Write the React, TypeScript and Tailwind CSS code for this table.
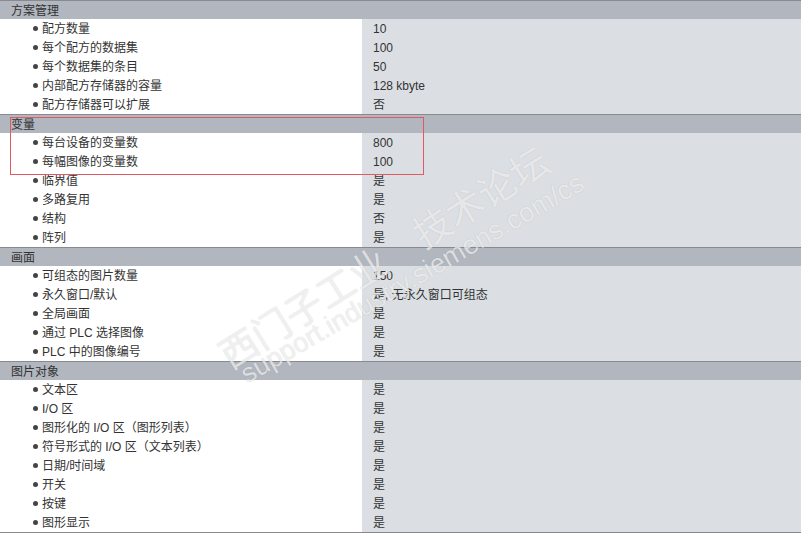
type Row = [string, string];

type Section = {
  title: string;
  rows: Row[];
};

const sections: Section[] = [
  {
    title: "方案管理",
    rows: [
      ["配方数量", "10"],
      ["每个配方的数据集", "100"],
      ["每个数据集的条目", "50"],
      ["内部配方存储器的容量", "128 kbyte"],
      ["配方存储器可以扩展", "否"],
    ],
  },
  {
    title: "变量",
    rows: [
      ["每台设备的变量数", "800"],
      ["每幅图像的变量数", "100"],
      ["临界值", "是"],
      ["多路复用", "是"],
      ["结构", "否"],
      ["阵列", "是"],
    ],
  },
  {
    title: "画面",
    rows: [
      ["可组态的图片数量", "150"],
      ["永久窗口/默认", "是, 无永久窗口可组态"],
      ["全局画面", "是"],
      ["通过 PLC 选择图像", "是"],
      ["PLC 中的图像编号", "是"],
    ],
  },
  {
    title: "图片对象",
    rows: [
      ["文本区", "是"],
      ["I/O 区", "是"],
      ["图形化的 I/O 区（图形列表）", "是"],
      ["符号形式的 I/O 区（文本列表）", "是"],
      ["日期/时间域", "是"],
      ["开关", "是"],
      ["按键", "是"],
      ["图形显示", "是"],
    ],
  },
];

export default function App() {
  return (
    <div
      className="relative h-[536px] w-[808px] overflow-hidden bg-white text-[12px] text-[#333]"
      style={{ fontFamily: '"Liberation Sans", "Noto Sans CJK SC", sans-serif' }}
    >
      <div className="w-[801px] border-b border-[#878a90]">
        {sections.map((section) => (
          <div key={section.title}>
            <div className="flex h-[19px] items-center border-t border-[#878a90] bg-[#b1b6bf] pl-[11px] pt-[1px] leading-none">
              {section.title}
            </div>

            {section.rows.map(([label, value]) => (
              <div key={label} className="flex h-[19px] leading-none">
                <div className="flex w-[362px] shrink-0 items-center bg-white">
                  <span className="ml-[33px] mr-[4px] h-[5px] w-[5px] rounded-full bg-[#444]" />
                  <span>{label}</span>
                </div>
                <div className="flex flex-1 items-center bg-[#dbdfe3] pl-[11px]">
                  {value}
                </div>
              </div>
            ))}
          </div>
        ))}
      </div>

      {/* red highlight box */}
      <div className="pointer-events-none absolute left-[10px] top-[117px] h-[58px] w-[414px] border border-[#e05a64]" />

      {/* watermark */}
      <div
        className="pointer-events-none absolute left-[222px] top-[338px] h-[38px] origin-left whitespace-nowrap text-[38px] leading-none text-white/70 [text-shadow:0_0_1px_rgba(0,0,0,0.2)]"
        style={{ transform: "rotate(-32deg)", fontFamily: '"Noto Sans CJK SC", sans-serif' }}
      >
        西门子工业　技术论坛
      </div>
      <div
        className="pointer-events-none absolute left-[243px] top-[363px] h-[27px] origin-left whitespace-nowrap text-[27px] leading-none text-white/70 [text-shadow:0_0_1px_rgba(0,0,0,0.2)]"
        style={{ transform: "rotate(-30deg)", fontFamily: '"Liberation Sans", sans-serif' }}
      >
        support.industry.siemens.com/cs
      </div>
    </div>
  );
}
